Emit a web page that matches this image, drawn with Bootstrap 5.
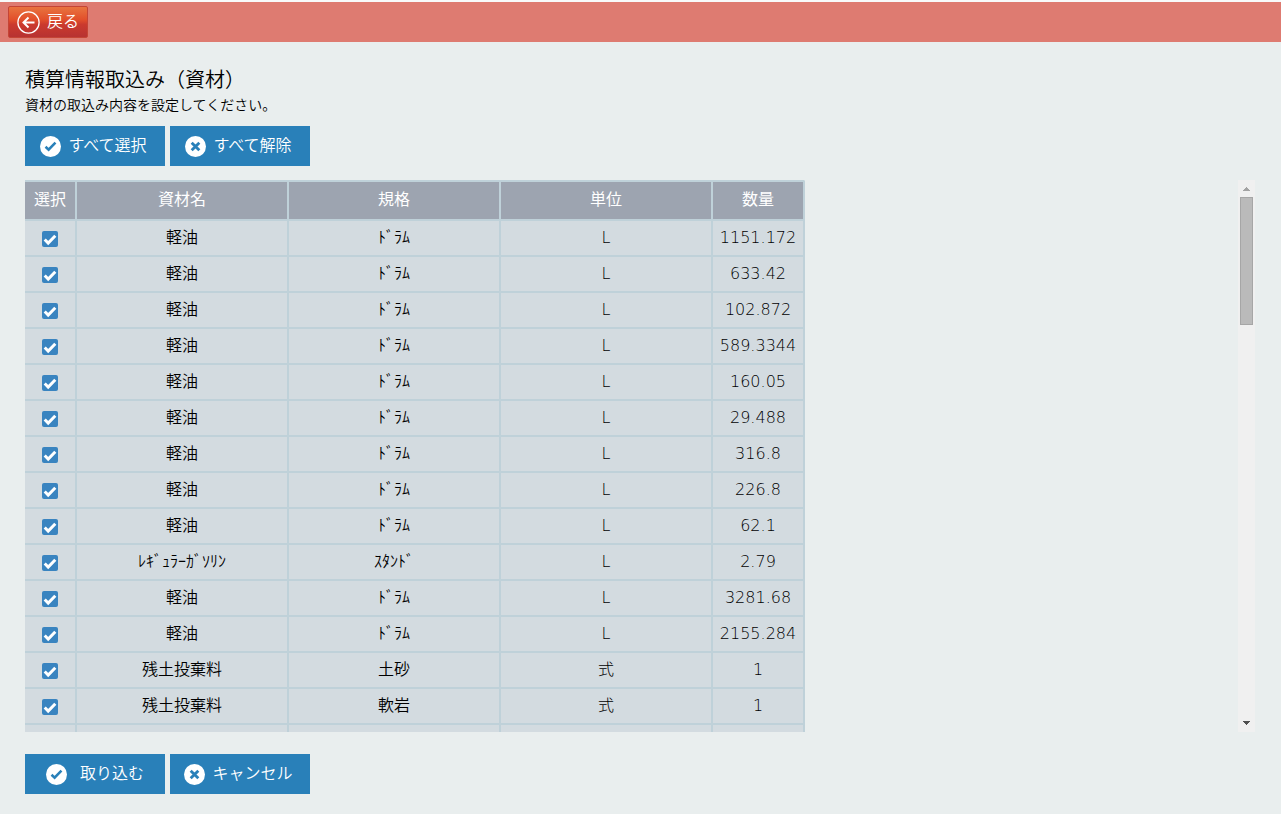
<!DOCTYPE html>
<html lang="ja">
<head>
<meta charset="utf-8">
<meta name="viewport" content="width=device-width, initial-scale=1">
<title>積算情報取込み（資材）</title>
<link href="https://cdn.jsdelivr.net/npm/bootstrap@5.3.0/dist/css/bootstrap.min.css" rel="stylesheet">
<style>
  body {
    background: #e9eeee;
    color: #000;
    font: 350 16px/24px "DejaVu Sans", "Noto Sans CJK JP", sans-serif;
  }
  .top-bar { background: #de7b71; border-top: 2px solid #f8fafa; height: 42px; padding: 0 8px; }
  .btn-back {
    width: 80px; height: 32px; padding: 0 8px; gap: 7px;
    border: 1px solid #c54536; border-radius: 2px;
    background: linear-gradient(#e8743f 0%, #e24f2b 42%, #cb3a2e 58%, #b73232 100%);
    color: #fff; font: inherit;
  }
  .page-body { padding: 26px 26px 20px 25px; }
  .page-title { font-size: 20px; line-height: 24px; font-weight: inherit; }
  .page-note { font-size: 14px; line-height: 20px; margin: 3px 0 11px; }
  .btn-flat {
    width: 140px; height: 40px; padding: 0 3px 0 0; border: 0; border-radius: 0; gap: 7px;
    background: #2980b9; color: #fff; font: inherit;
  }
  .btn-import { gap: 13px; padding: 0; }
  .btn-row { gap: 5px; }
  .list-area { margin: 14px 0 22px; min-height: 0; }
  .list-view { overflow-y: auto; scrollbar-width: none; }
  .list-view::-webkit-scrollbar { display: none; }
  .scroll-rail { width: 17px; background: #f0f0f0; }
  .scroll-rail svg { display: block; flex: none; }
  .scroll-track { min-height: 0; padding: 0 2px; }
  .scroll-thumb { background: #bababa; border: 1px solid #a6a6a6; }
  .material-table { table-layout: fixed; width: 780px; border-collapse: separate; border-spacing: 0; }
  .material-table th, .material-table td {
    padding: 0; text-align: center; vertical-align: middle;
    border: 0 solid #bfd1d9; border-width: 0 2px 2px 0;
  }
  .material-table th { height: 41px; padding-bottom: 2px; background: #9da4b0; color: #fff; font-weight: 400; border-top-width: 2px; }
  .material-table th:last-child { border-top-right-radius: 2px; }
  .material-table td { height: 36px; background: #d3dbe0; }
  .material-table td:first-child { padding: 2px 0 0; }
  .col-pick { width: 52px; }
  .col-text { width: 212px; }
  .col-qty { width: 92px; }
  .material-table td:nth-child(n+4) { font-weight: 300; }
  .material-table .form-check-input { display: block; width: 16px; height: 16px; margin: 0 auto; border: 0; border-radius: 2px; }
  .material-table .form-check-input:checked {
    background: #3984c0 url("data:image/svg+xml,%3Csvg xmlns='http://www.w3.org/2000/svg' viewBox='0 0 16 16'%3E%3Cpath d='M2.700 8.500l3.500 3.500L13.300 4.800' fill='none' stroke='%23fff' stroke-width='3'/%3E%3C/svg%3E") center/16px 16px no-repeat;
  }
</style>
</head>
<body class="vh-100 d-flex flex-column">
<svg class="d-none" aria-hidden="true">
  <symbol id="ic-check" viewBox="0 0 22 22"><circle cx="11" cy="11" r="11" fill="#fff"/><path d="M5.800 11.300l3.200 3L16.200 7" fill="none" stroke="#2980b9" stroke-width="2.700"/></symbol>
  <symbol id="ic-cross" viewBox="0 0 22 22"><circle cx="11" cy="11" r="11" fill="#fff"/><path d="M7 7l8 8M15 7l-8 8" fill="none" stroke="#2980b9" stroke-width="3"/></symbol>
</svg>

<header class="top-bar d-flex align-items-center flex-shrink-0">
  <button type="button" class="btn btn-back d-flex align-items-center">
    <svg width="23" height="23" viewBox="0 0 23 23" fill="none" stroke="#fff"><circle cx="11.500" cy="11.500" r="10.600" stroke-width="1.300"/><path d="M17.500 11.500H7M11.500 6.500l-5 5 5 5" stroke-width="2"/></svg>
    <span>戻る</span>
  </button>
</header>

<main class="page-body flex-grow-1 d-flex flex-column overflow-hidden">
  <h1 class="page-title mb-0">積算情報取込み（資材）</h1>
  <p class="page-note">資材の取込み内容を設定してください。</p>
  <div class="btn-row d-flex">
    <button type="button" id="pickAll" class="btn btn-flat d-flex align-items-center justify-content-center"><svg width="21" height="21"><use href="#ic-check"/></svg><span>すべて選択</span></button>
    <button type="button" id="pickNone" class="btn btn-flat d-flex align-items-center justify-content-center"><svg width="21" height="21"><use href="#ic-cross"/></svg><span>すべて解除</span></button>
  </div>

  <div class="list-area flex-grow-1 d-flex">
    <div id="listView" class="list-view flex-grow-1" tabindex="0">
      <table class="material-table">
        <colgroup><col class="col-pick"><col class="col-text"><col class="col-text"><col class="col-text"><col class="col-qty"></colgroup>
        <thead><tr><th scope="col">選択</th><th scope="col">資材名</th><th scope="col">規格</th><th scope="col">単位</th><th scope="col">数量</th></tr></thead>
        <tbody id="materials"></tbody>
      </table>
    </div>
    <div class="scroll-rail d-flex flex-column flex-shrink-0" aria-hidden="true">
      <svg width="17" height="17" shape-rendering="crispEdges"><path d="M8 7h1v1h1v1h1v1h1v1H5v-1h1V9h1V8h1z" fill="#a3a3a3"/></svg>
      <div id="track" class="scroll-track flex-grow-1"><div id="thumb" class="scroll-thumb"></div></div>
      <svg width="17" height="17" shape-rendering="crispEdges"><path d="M5 6h7v1h-1v1h-1v1H9v1H8V9H7V8H6V7H5z" fill="#505050"/></svg>
    </div>
  </div>

  <div class="btn-row d-flex">
    <button type="button" class="btn btn-flat btn-import d-flex align-items-center justify-content-center"><svg width="21" height="21"><use href="#ic-check"/></svg><span>取り込む</span></button>
    <button type="button" class="btn btn-flat d-flex align-items-center justify-content-center"><svg width="21" height="21"><use href="#ic-cross"/></svg><span>キャンセル</span></button>
  </div>
</main>

<script src="https://cdn.jsdelivr.net/npm/bootstrap@5.3.0/dist/js/bootstrap.bundle.min.js"></script>
<script>
  const rowCount = 61;
  const materials = [
    ["軽油", "ﾄﾞﾗﾑ", "L", "1151.172"],
    ["軽油", "ﾄﾞﾗﾑ", "L", "633.42"],
    ["軽油", "ﾄﾞﾗﾑ", "L", "102.872"],
    ["軽油", "ﾄﾞﾗﾑ", "L", "589.3344"],
    ["軽油", "ﾄﾞﾗﾑ", "L", "160.05"],
    ["軽油", "ﾄﾞﾗﾑ", "L", "29.488"],
    ["軽油", "ﾄﾞﾗﾑ", "L", "316.8"],
    ["軽油", "ﾄﾞﾗﾑ", "L", "226.8"],
    ["軽油", "ﾄﾞﾗﾑ", "L", "62.1"],
    ["ﾚｷﾞｭﾗｰｶﾞｿﾘﾝ", "ｽﾀﾝﾄﾞ", "L", "2.79"],
    ["軽油", "ﾄﾞﾗﾑ", "L", "3281.68"],
    ["軽油", "ﾄﾞﾗﾑ", "L", "2155.284"],
    ["残土投棄料", "土砂", "式", "1"],
    ["残土投棄料", "軟岩", "式", "1"]
  ];
  const body = document.getElementById("materials");
  for (let i = 0; i < rowCount; i++) {
    const row = body.insertRow();
    const box = document.createElement("input");
    box.type = "checkbox";
    box.className = "form-check-input";
    box.checked = true;
    row.insertCell().append(box);
    const item = materials[i] || ["", "", "", ""];
    item.forEach((value, n) => {
      const cell = row.insertCell();
      cell.textContent = value;
      if (n === 0 && value) { cell.id = "name" + i; box.setAttribute("aria-labelledby", cell.id); }
    });
    if (!item[0]) box.setAttribute("aria-label", "選択");
  }
  const setAll = on => body.querySelectorAll("input").forEach(b => b.checked = on);
  document.getElementById("pickAll").onclick = () => setAll(true);
  document.getElementById("pickNone").onclick = () => setAll(false);

  const view = document.getElementById("listView");
  const track = document.getElementById("track");
  const thumb = document.getElementById("thumb");
  function placeThumb() {
    const scale = track.clientHeight / view.scrollHeight;
    thumb.style.height = Math.round(view.clientHeight * scale) + "px";
    thumb.style.marginTop = Math.round(view.scrollTop * scale) + "px";
  }
  view.addEventListener("scroll", placeThumb);
  window.addEventListener("resize", placeThumb);
  placeThumb();
</script>
</body>
</html>
